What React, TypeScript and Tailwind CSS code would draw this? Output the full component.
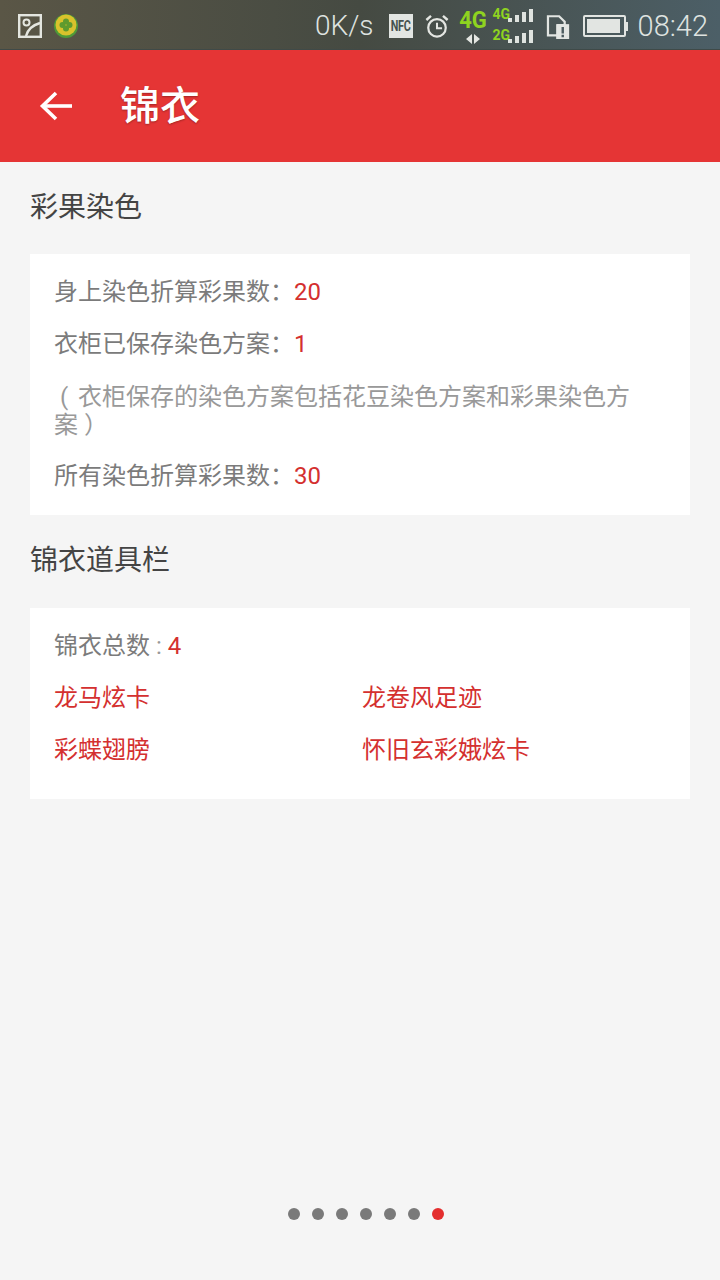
import React from "react";

const font = { fontFamily: '"Roboto", "Noto Sans CJK SC", sans-serif' };

function Bars() {
  return (
    <div className="flex items-end gap-[3px] h-[13px]">
      <div className="w-[4px] h-[4px] bg-[#dfe3df]" />
      <div className="w-[4px] h-[7px] bg-[#dfe3df]" />
      <div className="w-[4px] h-[10px] bg-[#dfe3df]" />
      <div className="w-[4px] h-[13px] bg-[#dfe3df]" />
    </div>
  );
}

function StatusBar() {
  return (
    <div className="h-[50px] flex items-center pl-[18px] pr-[12px] pt-[2px] bg-gradient-to-r from-[#5a5646] via-[#454a42] to-[#4c5f67] text-[#e4e6e2] shadow-[inset_0_-1px_0_#3f4a48]">
      <svg width="24" height="24" viewBox="0 0 24 24" fill="none" stroke="#e4e6e0" strokeWidth="2.4">
        <rect x="1.2" y="1.2" width="21.6" height="21.6" />
        <circle cx="8.5" cy="8.5" r="3" strokeWidth="2" />
        <path d="M8 22 C10 15 15 11 22 9" strokeWidth="2.4" />
      </svg>
      <svg className="ml-[12px]" width="24" height="24" viewBox="0 0 24 24">
        <circle cx="12" cy="12" r="12" fill="#4f9a38" />
        <circle cx="12" cy="11" r="10.500" fill="#d9c22c" />
        <circle cx="8.500" cy="11" r="3" fill="#5f9a2e" />
        <circle cx="15.500" cy="11" r="3" fill="#5f9a2e" />
        <circle cx="12" cy="7.500" r="3" fill="#5f9a2e" />
        <circle cx="12" cy="14.500" r="3" fill="#5f9a2e" />
      </svg>
      <div className="flex-1" />
      <span className="text-[28px] leading-none font-light text-[#dfe3e0]">0K/s</span>
      <div className="ml-[15px] w-[24px] h-[24px] bg-[#e2e5e2] flex items-center justify-center overflow-hidden">
        <span className="text-[15px] leading-none font-bold text-[#46524f] scale-x-[0.72] tracking-[-0.5px]">NFC</span>
      </div>
      <svg className="ml-[12px]" width="24" height="26" viewBox="0 0 26 28" fill="none" stroke="#e4e6e2" strokeWidth="2.400">
        <circle cx="13" cy="16" r="9.500" />
        <path d="M13 10.500v6h5.500" strokeWidth="2.200" />
        <path d="M1.500 7.500l5-4.500M24.500 7.500l-5-4.500" strokeWidth="2.600" />
      </svg>
      <div className="ml-[11px] w-[27px] h-[42px] flex flex-col items-center pt-[1px]">
        <span className="text-[24px] leading-[28px] font-bold text-[#8fd320] scale-x-[0.92]">4G</span>
        <svg width="14" height="10" viewBox="0 0 14 10" fill="#e4e6e2">
          <path d="M6 0v10l-6-5zM8 0l6 5-6 5z" />
        </svg>
      </div>
      <div className="ml-[6px] w-[40px] h-[34px] flex flex-col justify-between">
        <div className="flex items-end justify-between relative">
          <span className="text-[14px] leading-[13px] font-bold text-[#8fd320] absolute left-0 -top-[1px]">4G</span>
          <div className="flex-1" />
          <Bars />
        </div>
        <div className="flex items-end justify-between relative">
          <span className="text-[14px] leading-[13px] font-bold text-[#8fd320] absolute left-0 -top-[1px]">2G</span>
          <div className="flex-1" />
          <Bars />
        </div>
      </div>
      <svg className="ml-[13px]" width="24" height="26" viewBox="0 0 24 28">
        <path d="M1.200 3.500h12l6 6v3.500h-7v11h-11z" fill="none" stroke="#e2e5e2" strokeWidth="2.400" />
        <path d="M10 12h14v16h-14z" fill="#e2e5e2" />
        <path d="M15.800 15h2.600v7h-2.600zM15.800 23.500h2.600v2.500h-2.600z" fill="#4c5c60" />
      </svg>
      <div className="ml-[13px] flex items-center">
        <div className="w-[43px] h-[22px] border-2 border-[#e2e5e2] rounded-[2px] p-[2px]">
          <div className="w-[33px] h-full bg-[#e2e5e2]" />
        </div>
        <div className="w-[2px] h-[9px] bg-[#e2e5e2]" />
      </div>
      <span className="ml-[10px] text-[29px] leading-none font-light text-[#dfe3e0]">08:42</span>
    </div>
  );
}

function Header() {
  return (
    <div className="h-[112px] bg-[#e53535] flex items-center pl-[39px] text-white">
      <svg width="34" height="34" viewBox="0 0 34 34" fill="none" stroke="white" strokeWidth="3.600" strokeLinecap="butt">
        <path d="M33 17H4" />
        <path d="M17 4L3.500 17 17 30" />
      </svg>
      <span className="ml-[47px] text-[40px] leading-none font-medium mt-[2px] [text-shadow:0_1px_2px_rgba(0,0,0,0.3)]">锦衣</span>
    </div>
  );
}

function Red({ children }: { children: React.ReactNode }) {
  return <span className="text-[#d4302f]">{children}</span>;
}

export default function App() {
  return (
    <div className="w-[720px] h-[1280px] bg-[#f5f5f5] flex flex-col overflow-hidden" style={font}>
      <StatusBar />
      <Header />
      <div className="flex-1 flex flex-col px-[30px]">
        <div className="h-[92px] flex items-start pt-[30px]">
          <h2 className="text-[28px] leading-[32px] text-[#444444]">彩果染色</h2>
        </div>
        <div className="bg-white h-[261px] pl-[24px] pr-[40px] pt-[25px] text-[24px] leading-[27px] text-[#7b7b7b]">
          <p>身上染色折算彩果数：<Red>20</Red></p>
          <p className="mt-[25px]">衣柜已保存染色方案：<Red>1</Red></p>
          <p className="mt-[25px] text-[#999999] leading-[28px]"><span className="inline-block w-[24px] pl-[6px]">(</span>衣柜保存的染色方案包括花豆染色方案和彩果染色方案 ）</p>
          <p className="mt-[24px]">所有染色折算彩果数：<Red>30</Red></p>
        </div>
        <div className="h-[93px] flex items-start pt-[30px]">
          <h2 className="text-[28px] leading-[32px] text-[#444444]">锦衣道具栏</h2>
        </div>
        <div className="bg-white h-[191px] pl-[24px] pt-[25px] text-[24px] leading-[27px] text-[#7b7b7b]">
          <p>锦衣总数 <span className="text-[#999999]">:</span> <Red>4</Red></p>
          <div className="grid grid-cols-[308px_1fr] gap-y-[25px] mt-[25px] text-[#d4302f]">
            <span>龙马炫卡</span>
            <span>龙卷风足迹</span>
            <span>彩蝶翅膀</span>
            <span>怀旧玄彩娥炫卡</span>
          </div>
        </div>
        <div className="flex-1" />
        <div className="flex justify-center gap-[12px] pb-[60px] pl-[12px]">
          {[0, 1, 2, 3, 4, 5].map((i) => (
            <div key={i} className="w-[12px] h-[12px] rounded-full bg-[#7a7a7a]" />
          ))}
          <div className="w-[12px] h-[12px] rounded-full bg-[#e42e2e]" />
        </div>
      </div>
    </div>
  );
}
